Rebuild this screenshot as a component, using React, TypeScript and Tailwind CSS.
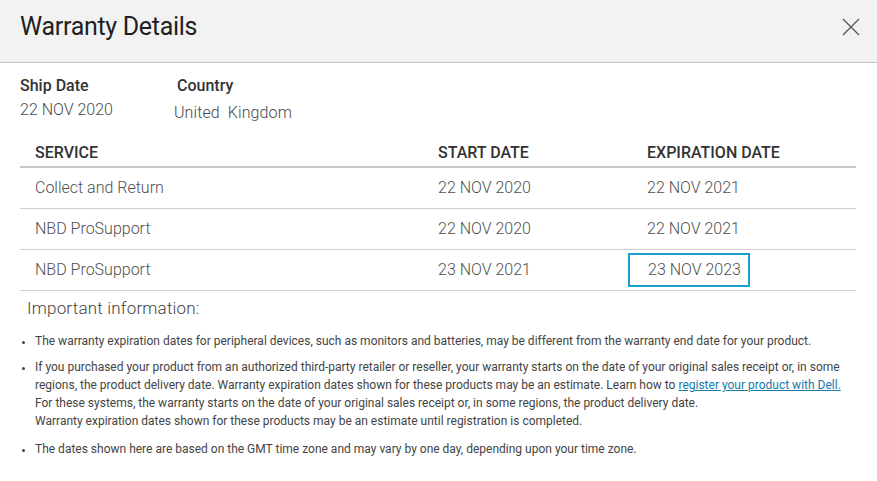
interface WarrantyRow {
  service: string;
  start: string;
  end: string;
  highlight?: boolean;
}

const rows: WarrantyRow[] = [
  { service: 'Collect and Return', start: '22 NOV 2020', end: '22 NOV 2021' },
  { service: 'NBD ProSupport', start: '22 NOV 2020', end: '22 NOV 2021' },
  { service: 'NBD ProSupport', start: '23 NOV 2021', end: '23 NOV 2023', highlight: true },
];

const CloseIcon = () => (
  <svg width="18" height="18" viewBox="0 0 18 18" className="text-[#555]">
    <path d="M1 1 L17 17 M17 1 L1 17" stroke="currentColor" strokeWidth="1.3" fill="none" />
  </svg>
);

const App = () => {
  return (
    <div className="w-[877px] h-[481px] bg-white overflow-hidden font-['Roboto',sans-serif] text-[#4a4a4a]">
      <div className="h-[63px] bg-[#f2f2f2] border-b border-[#c4c4c4] flex items-center justify-between pl-5 pr-[17px] pb-[9px]">
        <h1 className="text-[25px] text-[#1f1f1f] tracking-[-0.3px]">Warranty Details</h1>
        <CloseIcon />
      </div>

      <div className="px-5 pt-[12px]">
        <div className="flex">
          <div className="w-[154px]">
            <div className="text-[16px] font-medium text-[#333] leading-[22px]">Ship Date</div>
            <div className="text-[16px] font-light leading-[22px] mt-[2px]">22 NOV 2020</div>
          </div>
          <div>
            <div className="text-[16px] font-medium text-[#333] leading-[22px] pl-[3px]">Country</div>
            <div className="text-[16px] font-light leading-[22px] mt-[5px] tracking-[0.1px]">United&nbsp; Kingdom</div>
          </div>
        </div>

        <table className="w-[836px] mt-[14px] border-collapse table-fixed text-[16px]">
          <thead>
            <tr className="border-b-2 border-[#c8c8c8] text-[#333]">
              <th className="text-left font-medium pl-[15px] h-[29px] w-[418px] pt-[2px]">SERVICE</th>
              <th className="text-left font-medium w-[209px] pt-[2px]">START DATE</th>
              <th className="text-left font-medium pt-[2px]">EXPIRATION DATE</th>
            </tr>
          </thead>
          <tbody className="font-light text-[#505050]">
            {rows.map((r, i) => (
              <tr key={i} className="border-b border-[#cfcfcf] h-[41px]">
                <td className="pl-[15px]">{r.service}</td>
                <td>{r.start}</td>
                <td>
                  {r.highlight ? (
                    <span className="inline-block -ml-[19px] pl-[18px] pr-[7px] py-[3px] border-2 border-[#1a9fd0]">
                      {r.end}
                    </span>
                  ) : (
                    r.end
                  )}
                </td>
              </tr>
            ))}
          </tbody>
        </table>

        <h2 className="text-[17px] font-light ml-[7px] mt-[5px] text-[#444] tracking-[0.2px]">Important information:</h2>

        <ul className="list-disc pl-[15px] mt-[11px] text-[12px] leading-[18px] text-[#444] marker:text-[11px]">
          <li>
            The warranty expiration dates for peripheral devices, such as monitors and batteries, may be different from
            the warranty end date for your product.
          </li>
          <li className="mt-[8px]">
            If you purchased your product from an authorized third-party retailer or reseller, your warranty starts on the
            date of your original sales receipt or, in some regions, the product delivery date. Warranty expiration dates
            shown for these products may be an estimate. Learn how to{' '}
            <a href="#" className="text-[#1a7aa8] underline">
              register your product with Dell.
            </a>
            <br />
            For these systems, the warranty starts on the date of your original sales receipt or, in some regions, the
            product delivery date.
            <br />
            Warranty expiration dates shown for these products may be an estimate until registration is completed.
          </li>
          <li className="mt-[10px]">
            The dates shown here are based on the GMT time zone and may vary by one day, depending upon your time zone.
          </li>
        </ul>
      </div>
    </div>
  );
};

export default App;
